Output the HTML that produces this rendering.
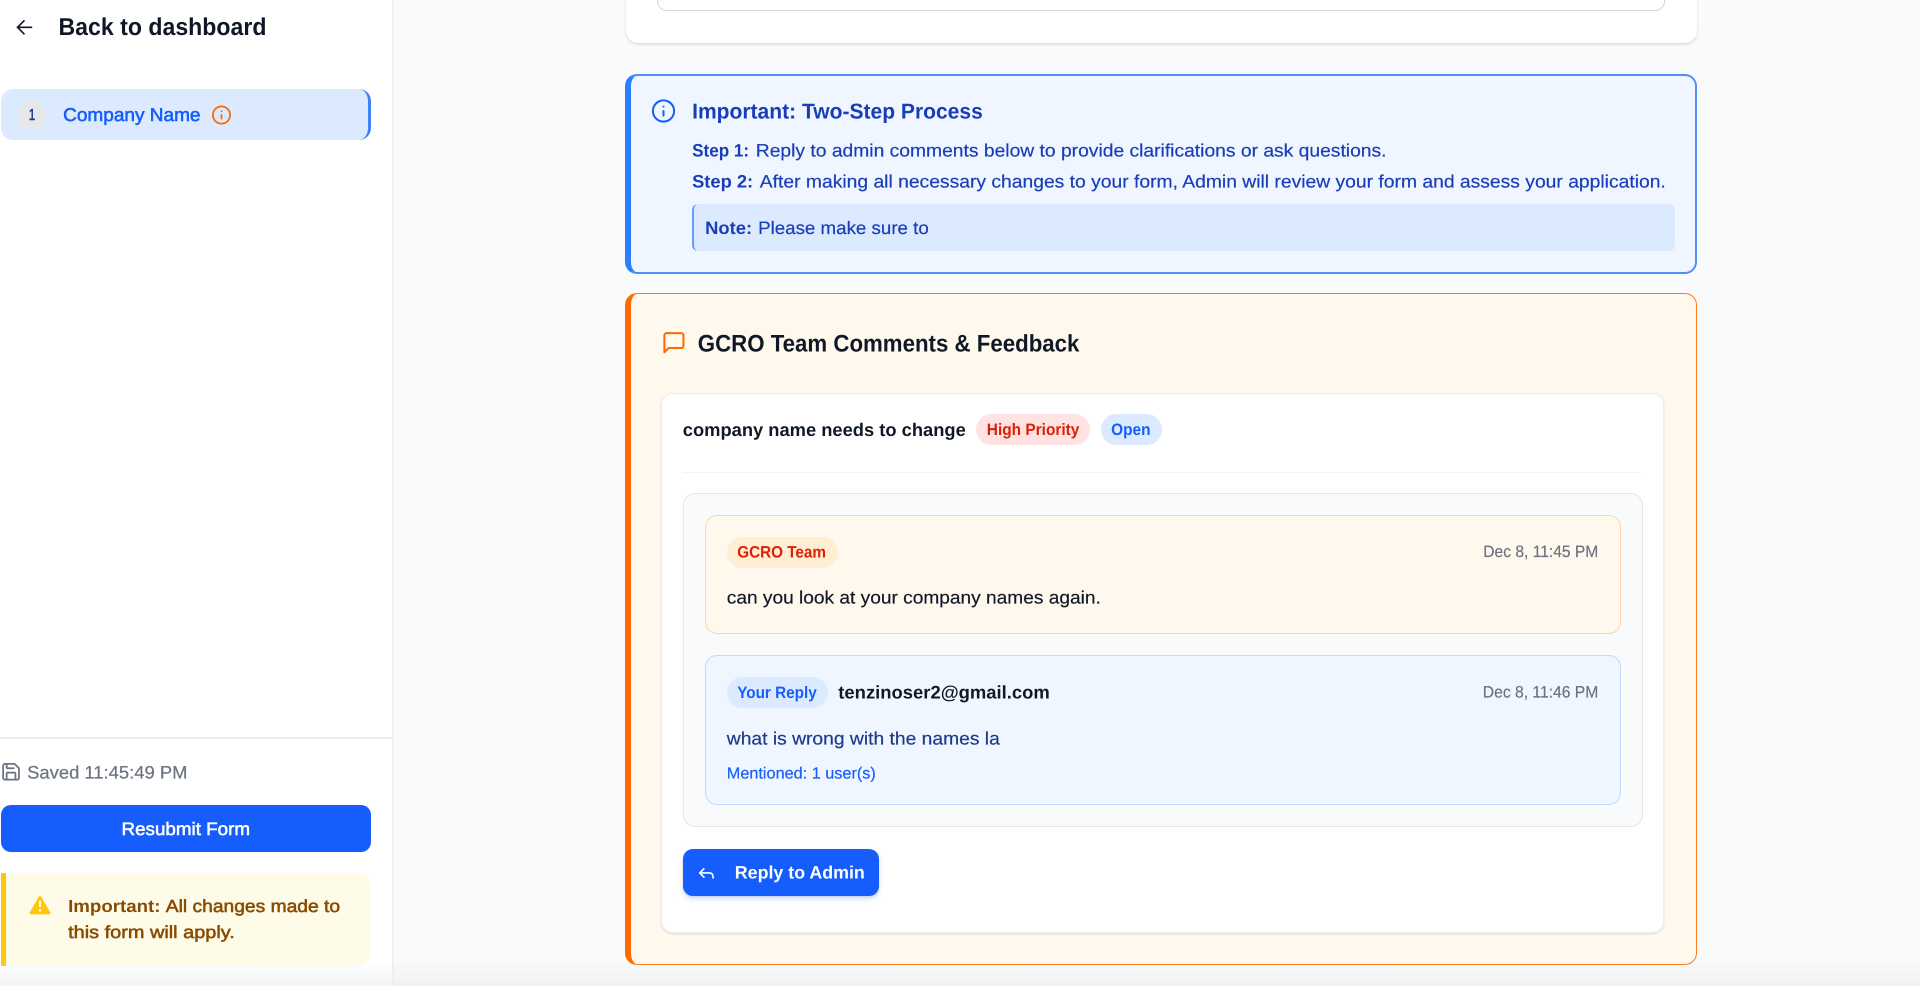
<!DOCTYPE html>
<html lang="en">
<head>
<meta charset="utf-8">
<title>Form feedback</title>
<style>
html,body{margin:0;padding:0;width:1920px;height:986px;overflow:hidden;background:#f9fafb}
#wrap{position:absolute;left:0;top:0;width:1920px;height:986px;overflow:hidden;filter:blur(.3px)}
.b{position:absolute;box-sizing:border-box}
svg{position:absolute;left:0;top:0}
text{font-family:"Liberation Sans",Arial,sans-serif;text-rendering:geometricPrecision}
.r{stroke-width:.2px;paint-order:stroke}
.m{stroke-width:.55px;paint-order:stroke}
.s{font-weight:700}
</style>
</head>
<body>
<div id="wrap">
<!-- sidebar -->
<div class="b" style="left:0;top:0;width:394px;height:986px;background:#fff;border-right:2px solid #eff0f3"></div>
<div class="b" style="left:1px;top:89px;width:370px;height:51px;background:#dbeafe;border-radius:12px;border-right:3px solid #3b82f6"></div>
<div class="b" style="left:17px;top:100px;width:30px;height:30px;border-radius:50%;background:#e5e7eb"></div>
<div class="b" style="left:0;top:737px;width:392px;height:2px;background:#eceef1"></div>
<div class="b" style="left:1px;top:805px;width:370px;height:47px;background:#155dfc;border-radius:10px"></div>
<div class="b" style="left:1px;top:872.5px;width:370px;height:93.5px;background:#fefce8;border-left:5px solid #ffc60a;border-radius:0 12px 12px 0"></div>

<!-- top card -->
<div class="b" style="left:625.5px;top:-40px;width:1071.5px;height:83px;background:#fff;border-radius:12px;box-shadow:0 2px 2px rgba(0,0,0,.1),0 0 1px rgba(0,0,0,.1)"></div>
<div class="b" style="left:657px;top:-40px;width:1008px;height:51px;background:#fff;border:1px solid #d1d5dc;border-radius:10px"></div>

<!-- blue info box -->
<div class="b" style="left:625px;top:73.5px;width:1072px;height:200px;background:#eff6ff;border:2px solid #4f8ff7;border-left:6px solid #2b7fff;border-radius:12px"></div>
<div class="b" style="left:692px;top:204px;width:983px;height:47px;background:#dbeafe;border-left:2px solid #60a0fa;border-radius:6px"></div>

<!-- orange box -->
<div class="b" style="left:625px;top:293px;width:1072px;height:671.5px;background:#fff8ed;border:1.5px solid #ff7a1a;border-left:6px solid #ff6900;border-radius:12px"></div>
<div class="b" style="left:661px;top:393px;width:1003px;height:540px;background:#fff;border:1px solid #eceef1;border-radius:12px;box-shadow:0 1px 2px rgba(0,0,0,.12)"></div>
<div class="b" style="left:976px;top:414px;width:114px;height:31px;background:#ffe2e2;border-radius:16px"></div>
<div class="b" style="left:1100.5px;top:414px;width:61px;height:31px;background:#dbeafe;border-radius:16px"></div>
<div class="b" style="left:683px;top:471.5px;width:959px;height:1px;background:#f3f4f6"></div>
<div class="b" style="left:683px;top:493px;width:959.5px;height:334px;background:#f9fafb;border:1px solid #e5e7eb;border-radius:12px"></div>
<div class="b" style="left:705px;top:515px;width:916px;height:119px;background:#fff8ed;border:1px solid #ffd6a7;border-radius:12px"></div>
<div class="b" style="left:726.5px;top:537px;width:111px;height:31px;background:#ffedd4;border-radius:16px"></div>
<div class="b" style="left:705px;top:655px;width:916px;height:150px;background:#eff6ff;border:1px solid #bedbff;border-radius:12px"></div>
<div class="b" style="left:726.5px;top:677px;width:101.5px;height:31px;background:#dbeafe;border-radius:16px"></div>
<div class="b" style="left:683px;top:849px;width:196px;height:47px;background:#155dfc;border-radius:10px;box-shadow:0 3px 6px rgba(21,93,252,.18),0 1px 2px rgba(0,0,0,.12)"></div>

<svg width="1920" height="986" viewBox="0 0 1920 986" xmlns="http://www.w3.org/2000/svg">
  <!-- icons -->
  <g fill="none" stroke="#101828" stroke-width="1.7" stroke-linecap="round" stroke-linejoin="round" transform="translate(12.5,15.3)"><path d="M11.5 18.5L5 12l6.5-6.5"/><path d="M19 12H5"/></g>
  <g fill="none" stroke="#ff6900" stroke-width="1.8" stroke-linecap="round"><circle cx="221.5" cy="115" r="8.6"/><path d="M221.5 115v3.6M221.5 111.2h.01"/></g>
  <g fill="none" stroke="#6a7282" stroke-width="2" stroke-linecap="round" stroke-linejoin="round" transform="translate(.5,761.2) scale(.88)"><path d="M15.2 3a2 2 0 0 1 1.4.6l3.8 3.8a2 2 0 0 1 .6 1.4V19a2 2 0 0 1-2 2H5a2 2 0 0 1-2-2V5a2 2 0 0 1 2-2z"/><path d="M17 21v-7a1 1 0 0 0-1-1H8a1 1 0 0 0-1 1v7"/><path d="M7 3v4a1 1 0 0 0 1 1h7"/></g>
  <path d="M40 897.5 L49 913 H31 Z" fill="#ffc60a" stroke="#ffc60a" stroke-width="2.8" stroke-linejoin="round"/>
  <rect x="39" y="900.5" width="2" height="7" rx="1" fill="#fefce8"/><circle cx="40" cy="910.6" r="1.2" fill="#fefce8"/>
  <g fill="none" stroke="#155dfc" stroke-width="2" stroke-linecap="round"><circle cx="663.5" cy="111" r="10.6"/><path d="M663.5 111v4.6M663.5 106.6h.01"/></g>
  <path d="M21 15a2 2 0 0 1-2 2H7l-4 4V5a2 2 0 0 1 2-2h14a2 2 0 0 1 2 2z" fill="none" stroke="#ff6900" stroke-width="1.9" stroke-linecap="round" stroke-linejoin="round" transform="translate(661.2,330) scale(1.06)"/>
  <g fill="none" stroke="#fff" stroke-width="2" stroke-linecap="round" stroke-linejoin="round" transform="translate(696.4,863) scale(.83)"><path d="M20 18v-2a4 4 0 0 0-4-4H4"/><path d="M9 17l-5-5 5-5"/></g>

  <g transform="translate(-.2,-.5)">
  <!-- sidebar text -->
  <text x="58.7" y="35.7" font-size="24.3" fill="#101828" class="s" textLength="208" lengthAdjust="spacingAndGlyphs">Back to dashboard</text>
  <text x="29" y="120.7" font-size="16" fill="#1c398e" stroke="#1c398e" class="m" textLength="6.5" lengthAdjust="spacingAndGlyphs">1</text>
  <text x="63.3" y="121.3" font-size="18.5" fill="#155dfc" stroke="#155dfc" class="m" textLength="137.4" lengthAdjust="spacingAndGlyphs">Company Name</text>
  <text x="27.3" y="779" font-size="18" fill="#6a7282" stroke="#6a7282" class="r" textLength="160.4" lengthAdjust="spacingAndGlyphs">Saved 11:45:49 PM</text>
  <text x="121.7" y="835.3" font-size="18" fill="#fff" stroke="#fff" class="m" textLength="128.6" lengthAdjust="spacingAndGlyphs">Resubmit Form</text>
  <text x="68.3" y="912.5" font-size="17.5" fill="#894b00" class="s" textLength="92.4" lengthAdjust="spacingAndGlyphs">Important:</text>
  <text x="166" y="912.5" font-size="17.5" fill="#894b00" stroke="#894b00" class="m" textLength="174.3" lengthAdjust="spacingAndGlyphs">All changes made to</text>
  <text x="68.3" y="938.3" font-size="17.5" fill="#894b00" stroke="#894b00" class="m" textLength="166.7" lengthAdjust="spacingAndGlyphs">this form will apply.</text>

  <!-- blue box text -->
  <text x="692.3" y="119" font-size="21.5" fill="#193cb8" class="s" textLength="290.7" lengthAdjust="spacingAndGlyphs">Important: Two-Step Process</text>
  <text x="692.3" y="157" font-size="18" fill="#193cb8" class="s" textLength="57" lengthAdjust="spacingAndGlyphs">Step 1:</text>
  <text x="756" y="157" font-size="18" fill="#193cb8" stroke="#193cb8" class="r" textLength="630.7" lengthAdjust="spacingAndGlyphs">Reply to admin comments below to provide clarifications or ask questions.</text>
  <text x="692.3" y="188" font-size="18" fill="#193cb8" class="s" textLength="61" lengthAdjust="spacingAndGlyphs">Step 2:</text>
  <text x="760" y="188" font-size="18" fill="#193cb8" stroke="#193cb8" class="r" textLength="906" lengthAdjust="spacingAndGlyphs">After making all necessary changes to your form, Admin will review your form and assess your application.</text>
  <text x="705.3" y="234.3" font-size="18" fill="#193cb8" class="s" textLength="47" lengthAdjust="spacingAndGlyphs">Note:</text>
  <text x="758.3" y="234.3" font-size="18" fill="#193cb8" stroke="#193cb8" class="r" textLength="170.7" lengthAdjust="spacingAndGlyphs">Please make sure to</text>

  <!-- orange box text -->
  <text x="698" y="352" font-size="24" fill="#101828" class="s" textLength="381.6" lengthAdjust="spacingAndGlyphs">GCRO Team Comments &amp; Feedback</text>
  <text x="683" y="436.7" font-size="18.3" fill="#101828" class="s" textLength="283" lengthAdjust="spacingAndGlyphs">company name needs to change</text>
  <text x="987" y="435.7" font-size="16.5" fill="#dc2006" class="s" textLength="92.6" lengthAdjust="spacingAndGlyphs">High Priority</text>
  <text x="1111.3" y="435.7" font-size="16.5" fill="#155dfc" class="s" textLength="39.4" lengthAdjust="spacingAndGlyphs">Open</text>
  <text x="737.4" y="558" font-size="16.5" fill="#dc2006" class="s" textLength="88.8" lengthAdjust="spacingAndGlyphs">GCRO Team</text>
  <text x="1483.5" y="557.7" font-size="16.5" fill="#6a7282" stroke="#6a7282" class="r" textLength="115" lengthAdjust="spacingAndGlyphs">Dec 8, 11:45 PM</text>
  <text x="727" y="604" font-size="18" fill="#101828" stroke="#101828" class="r" textLength="374" lengthAdjust="spacingAndGlyphs">can you look at your company names again.</text>
  <text x="737.4" y="698.3" font-size="16.5" fill="#155dfc" class="s" textLength="79.6" lengthAdjust="spacingAndGlyphs">Your Reply</text>
  <text x="838.5" y="699" font-size="18.3" fill="#101828" class="s" textLength="211.5" lengthAdjust="spacingAndGlyphs">tenzinoser2@gmail.com</text>
  <text x="1483" y="698" font-size="16.5" fill="#6a7282" stroke="#6a7282" class="r" textLength="115.5" lengthAdjust="spacingAndGlyphs">Dec 8, 11:46 PM</text>
  <text x="727" y="745" font-size="18" fill="#1c398e" stroke="#1c398e" class="r" textLength="273" lengthAdjust="spacingAndGlyphs">what is wrong with the names la</text>
  <text x="727" y="779" font-size="16" fill="#155dfc" stroke="#155dfc" class="r" textLength="149" lengthAdjust="spacingAndGlyphs">Mentioned: 1 user(s)</text>
  <text x="735" y="879" font-size="18" fill="#fff" class="s" textLength="130" lengthAdjust="spacingAndGlyphs">Reply to Admin</text>
  </g>
</svg>

<!-- bottom fade -->
<div class="b" style="left:0;top:962px;width:1920px;height:24px;background:linear-gradient(to bottom,rgba(229,231,235,0),rgba(229,231,235,.5))"></div>
</div>
</body>
</html>
